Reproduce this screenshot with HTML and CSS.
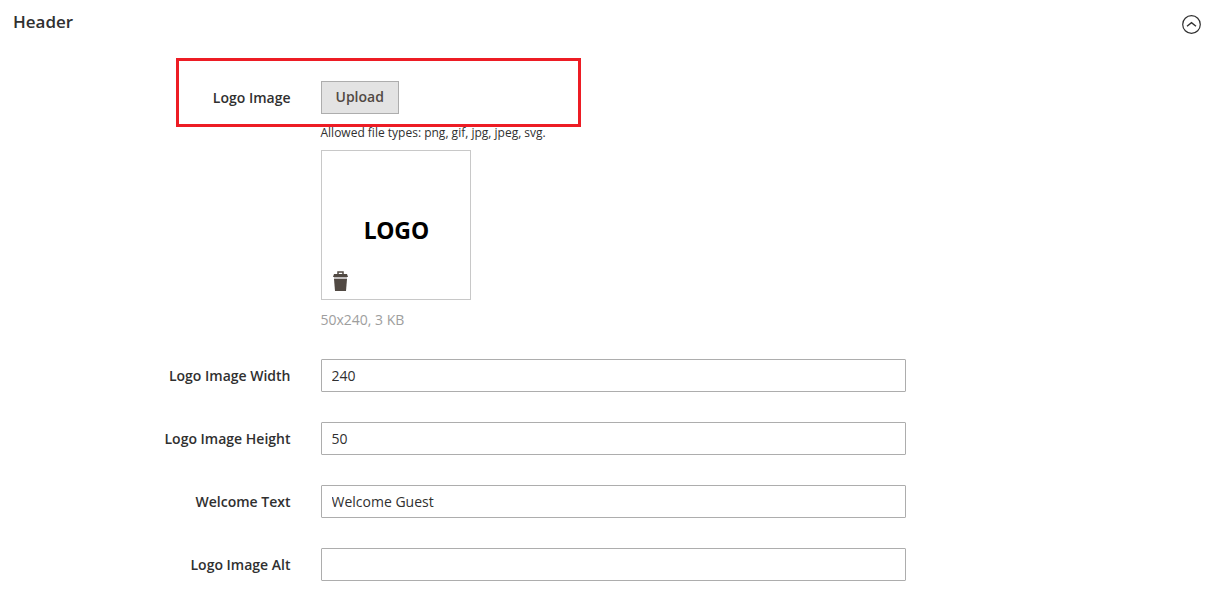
FILE: index.html
```html
<!DOCTYPE html>
<html lang="en">
<head>
<meta charset="utf-8">
<meta name="viewport" content="width=device-width, initial-scale=1">
<title>Header</title>
<link rel="stylesheet" href="styles.css">
</head>
<body>
<section class="panel">
  <header class="panel-head">
    <h2 class="panel-title">Header</h2>
    <button class="collapse" type="button" aria-label="Collapse section" aria-expanded="true">
      <svg width="19" height="19" viewBox="0 0 19 19" fill="none" stroke="currentColor">
        <circle cx="9.5" cy="9.5" r="8.8" stroke-width="1.2"/>
        <path d="M5 11.2 9.5 7.6 14 11.2" stroke-width="1.4"/>
      </svg>
    </button>
  </header>
  <form class="fields">
    <div class="field">
      <label class="label" for="logo-upload">Logo Image</label>
      <div class="control">
        <button class="upload" id="logo-upload" type="button">Upload</button>
        <p class="hint">Allowed file types: png, gif, jpg, jpeg, svg.</p>
        <div class="preview">
          <span class="preview-logo">LOGO</span>
          <button class="trash" type="button" aria-label="Delete image">
            <svg width="15" height="20" viewBox="0 0 15 20">
              <path d="M5 3V1h5v2" fill="none" stroke="#514943" stroke-width="1.5"/>
              <path d="M1 3h13l1 3H0z" fill="#514943"/>
              <path d="M1 6h13v2H1z" fill="#c4c0c0"/>
              <path d="M1 8h13l-1 12H2z" fill="#514943"/>
            </svg>
          </button>
        </div>
        <p class="meta">50x240, 3 KB</p>
        <div class="highlight"></div>
      </div>
    </div>
    <div class="field">
      <label class="label" for="logo-width">Logo Image Width</label>
      <input class="text" id="logo-width" type="text" value="240">
    </div>
    <div class="field">
      <label class="label" for="logo-height">Logo Image Height</label>
      <input class="text" id="logo-height" type="text" value="50">
    </div>
    <div class="field">
      <label class="label" for="welcome">Welcome Text</label>
      <input class="text" id="welcome" type="text" value="Welcome Guest">
    </div>
    <div class="field">
      <label class="label" for="logo-alt">Logo Image Alt</label>
      <input class="text" id="logo-alt" type="text" value="">
    </div>
  </form>
</section>
</body>
</html>
```
FILE: styles.css
```css
* {
  box-sizing: border-box;
}

body {
  margin: 0;
  background: #fff;
  color: #303030;
  font: 14px/20px "Open Sans", "Noto Sans", sans-serif;
}

button,
input {
  font: inherit;
  color: inherit;
}

.panel-head {
  display: flex;
  justify-content: space-between;
  align-items: flex-end;
  padding: 10px 17px 0 13px;
}

.panel-title {
  margin: 0;
  font-size: 17px;
  line-height: 24px;
  font-weight: 600;
}

.collapse {
  display: flex;
  padding: 0;
  border: 0;
  background: none;
}

.fields {
  display: flex;
  flex-direction: column;
  gap: 30px;
  padding: 47px 20px 20px 28px;
}

.field {
  display: grid;
  grid-template-columns: 1fr 2fr 1fr;
}

.label {
  padding: 7px 30px 0 0;
  text-align: right;
  font-weight: 600;
}

.control {
  position: relative;
  display: flex;
  flex-direction: column;
  align-items: flex-start;
}

.upload {
  height: 33px;
  padding: 0 14px 2px;
  border: 1px solid #adadad;
  background: #e3e3e3;
  color: #514943;
  font-weight: 600;
}

.hint {
  margin: 11px 0 9px;
  font-size: 12px;
  line-height: 16px;
}

.preview {
  position: relative;
  display: flex;
  align-items: center;
  justify-content: center;
  width: 150px;
  height: 150px;
  padding: 10px 0 0 2px;
  border: 1px solid #c8c8c8;
}

.preview-logo {
  color: #000;
  font: 700 23px/32px "Noto Sans", "Open Sans", sans-serif;
}

.trash {
  position: absolute;
  left: 11px;
  bottom: 8px;
  display: flex;
  padding: 0;
  border: 0;
  background: none;
}

.meta {
  margin: 11px 0 0;
  line-height: 18px;
  color: #9e9e9e;
}

.highlight {
  position: absolute;
  top: -23px;
  left: -145px;
  width: 405px;
  height: 69px;
  border: 3px solid #ed1c24;
  pointer-events: none;
}

.text {
  width: 100%;
  height: 33px;
  padding: 0 10px;
  border: 1px solid #adadad;
  border-radius: 1px;
  background: #fff;
}
```
